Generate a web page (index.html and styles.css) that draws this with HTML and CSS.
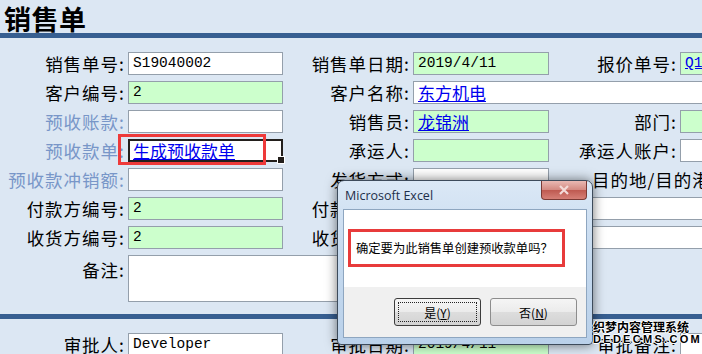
FILE: index.html
```html
<!DOCTYPE html>
<html lang="zh-CN">
<head>
    <meta charset="UTF-8">
    <meta name="viewport" content="width=device-width, initial-scale=1.0">
    <title>销售单</title>
    <link rel="stylesheet" href="styles.css">
</head>
<body>
    <div class="title">销售单</div>
    <div class="bar"></div>

    <div class="form">
        <div class="lbl">销售单号:</div>
        <div class="fld">S19040002</div>
        <div class="lbl">销售单日期:</div>
        <div class="fld green">2019/4/11</div>
        <div class="lbl">报价单号:</div>
        <div class="fld green"><a href="#">Q19040001</a></div>

        <div class="lbl">客户编号:</div>
        <div class="fld green">2</div>
        <div class="lbl">客户名称:</div>
        <div class="fld wide"><a href="#" class="cn">东方机电</a></div>

        <div class="lbl dim">预收账款:</div>
        <div class="fld"></div>
        <div class="lbl">销售员:</div>
        <div class="fld green"><a href="#" class="cn">龙锦洲</a></div>
        <div class="lbl">部门:</div>
        <div class="fld green"></div>

        <div class="lbl dim">预收款单:</div>
        <div class="fld sel"><a href="#" class="cn">生成预收款单</a></div>
        <div class="lbl">承运人:</div>
        <div class="fld green"></div>
        <div class="lbl">承运人账户:</div>
        <div class="fld"></div>

        <div class="lbl dim">预收款冲销额:</div>
        <div class="fld"></div>
        <div class="lbl">发货方式:</div>
        <div class="fld"></div>
        <div class="lbl left">目的地/目的港:</div>

        <div class="lbl">付款方编号:</div>
        <div class="fld green">2</div>
        <div class="lbl">付款方名称:</div>
        <div class="fld wide"></div>

        <div class="lbl">收货方编号:</div>
        <div class="fld green">2</div>
        <div class="lbl">收货方名称:</div>
        <div class="fld wide"></div>

        <div class="lbl top">备注:</div>
        <div class="fld note"></div>
    </div>

    <div class="bar bar-low"></div>

    <div class="form form-low">
        <div class="lbl">审批人:</div>
        <div class="fld">Developer</div>
        <div class="lbl">审批日期:</div>
        <div class="fld green">2019/4/11</div>
        <div class="lbl">审批备注:</div>
        <div class="fld"></div>
    </div>

    <!-- annotation round the selected cell -->
    <div class="mark-cell"></div>

    <div class="dlg">
        <div class="dlg-head">
            <span class="dlg-title">Microsoft Excel</span>
            <span class="dlg-close">
                <svg width="12" height="10" viewBox="0 0 12 10"><path d="M2 1 L10 9 M10 1 L2 9" stroke="#f3dcd9" stroke-width="2.2" fill="none"/></svg>
            </span>
        </div>
        <div class="dlg-body">
            <div class="dlg-msg">
                <div class="mark-msg">确定要为此销售单创建预收款单吗？</div>
            </div>
            <div class="dlg-btns">
                <button class="btn def">是(<u>Y</u>)</button>
                <button class="btn">否(<u>N</u>)</button>
            </div>
        </div>
    </div>

    <div class="stamp">
        <div>织梦内容管理系统</div>
        <div class="stamp-en">DEDECMS.COM</div>
    </div>
</body>
</html>
```

FILE: styles.css
```css
* {
    box-sizing: border-box;
}
body {
    margin: 0;
    width: 702px;
    height: 354px;
    overflow: hidden;
    position: relative;
    background-color: #dce7f3;
    font-family: "Noto Sans CJK SC", sans-serif;
    color: #000;
}
.title {
    height: 33px;
    line-height: 37px;
    padding-left: 4px;
    font-size: 27px;
    font-weight: bold;
    letter-spacing: 0.5px;
}
.bar {
    height: 5px;
    background-color: #375f91;
}
.bar-low {
    margin-top: 12px;
}
.form {
    display: grid;
    grid-template-columns: 128px 155px 130px 136px 131px 150px;
    grid-template-rows: repeat(7, 23px) 47px;
    row-gap: 6px;
    padding-top: 14px;
}
.form-low {
    grid-template-rows: 23px;
}
.lbl {
    font-size: 17.5px;
    line-height: 23px;
    letter-spacing: 1px;
    text-align: right;
    padding-right: 3px;
    white-space: nowrap;
}
.lbl.dim {
    color: #7896c8;
}
.lbl.left {
    grid-column: span 2;
    text-align: left;
    padding-left: 43px;
}
.lbl.top {
    line-height: 30px;
}
.fld {
    position: relative;
    border: 1px solid #949fab;
    background-color: #fff;
    font: 14.5px/21px "Liberation Mono", monospace;
    padding-left: 4px;
    white-space: nowrap;
}
.fld.green {
    background-color: #ccffcc;
}
.fld.wide {
    grid-column: span 3;
}
.fld.note {
    grid-column: span 3;
}
.fld.sel {
    border: 2px solid #231f1c;
    line-height: 19px;
    padding-left: 3px;
}
.fld.sel::after {
    content: "";
    position: absolute;
    right: -4px;
    bottom: -4px;
    width: 6px;
    height: 6px;
    background-color: #231f1c;
    border: 1px solid #fff;
}
a {
    color: #0000ee;
    text-decoration: underline;
}
.cn {
    font-family: "Noto Sans CJK SC", sans-serif;
    font-size: 17px;
}
.mark-cell {
    position: absolute;
    left: 118px;
    top: 134px;
    width: 148px;
    height: 31px;
    border: 3px solid #ee3a3a;
}

/* message box */
.dlg {
    position: absolute;
    left: 337px;
    top: 180px;
    width: 256px;
    height: 165px;
    display: flex;
    flex-direction: column;
    padding: 0 5px 6px;
    border: 1px solid #3d4b5b;
    border-radius: 7px 7px 4px 4px;
    background: linear-gradient(#dbe8f6, #c6daef 45%, #bad1ea);
    box-shadow: 0 0 12px rgba(0, 0, 0, 0.55);
}
.dlg-head {
    position: relative;
    height: 28px;
    display: flex;
    align-items: center;
    padding-left: 2px;
}
.dlg-title {
    font: 12.5px "Open Sans", sans-serif;
    color: #1d2f4a;
}
.dlg-close {
    position: absolute;
    right: 0;
    top: 0;
    width: 46px;
    height: 19px;
    display: flex;
    align-items: center;
    justify-content: center;
    border: 1px solid #7a3a35;
    border-top: none;
    border-radius: 0 0 4px 4px;
    background: linear-gradient(#e9b9b3, #d48a82 48%, #bf5a51 52%, #d68077);
}
.dlg-body {
    flex: 1;
    display: flex;
    flex-direction: column;
    background-color: #fff;
    border: 1px solid #8ea6c0;
}
.dlg-msg {
    height: 77px;
    padding: 19px 0 0 4px;
}
.mark-msg {
    width: 217px;
    height: 38px;
    border: 3px solid #e83b3b;
    padding-left: 5px;
    font-size: 12.3px;
    line-height: 32px;
}
.dlg-btns {
    flex: 1;
    display: flex;
    justify-content: flex-end;
    gap: 9px;
    padding: 11px 9px 0 0;
    background-color: #f0f0f0;
}
.btn {
    position: relative;
    width: 87px;
    height: 28px;
    border: 1px solid #8d8d8d;
    border-radius: 3px;
    background: linear-gradient(#f5f5f5, #ebebeb 50%, #dddddd 50%, #d3d3d3);
    font: 12px "Noto Sans CJK SC", sans-serif;
    color: #000;
    padding: 0;
}
.btn.def {
    border-color: #3c3c3c;
}
.btn.def::before {
    content: "";
    position: absolute;
    left: 3px;
    top: 3px;
    right: 3px;
    bottom: 3px;
    border: 1px dotted #222;
}

.stamp {
    position: absolute;
    left: 593px;
    top: 320px;
    font-size: 12px;
    font-weight: bold;
    line-height: 13px;
    text-shadow: 1px 0 #fff, -1px 0 #fff, 0 1px #fff, 0 -1px #fff;
}
.stamp-en {
    margin-top: 1px;
    font-family: "Liberation Sans", sans-serif;
    font-size: 11px;
    line-height: 10px;
    letter-spacing: 2.3px;
}
```
